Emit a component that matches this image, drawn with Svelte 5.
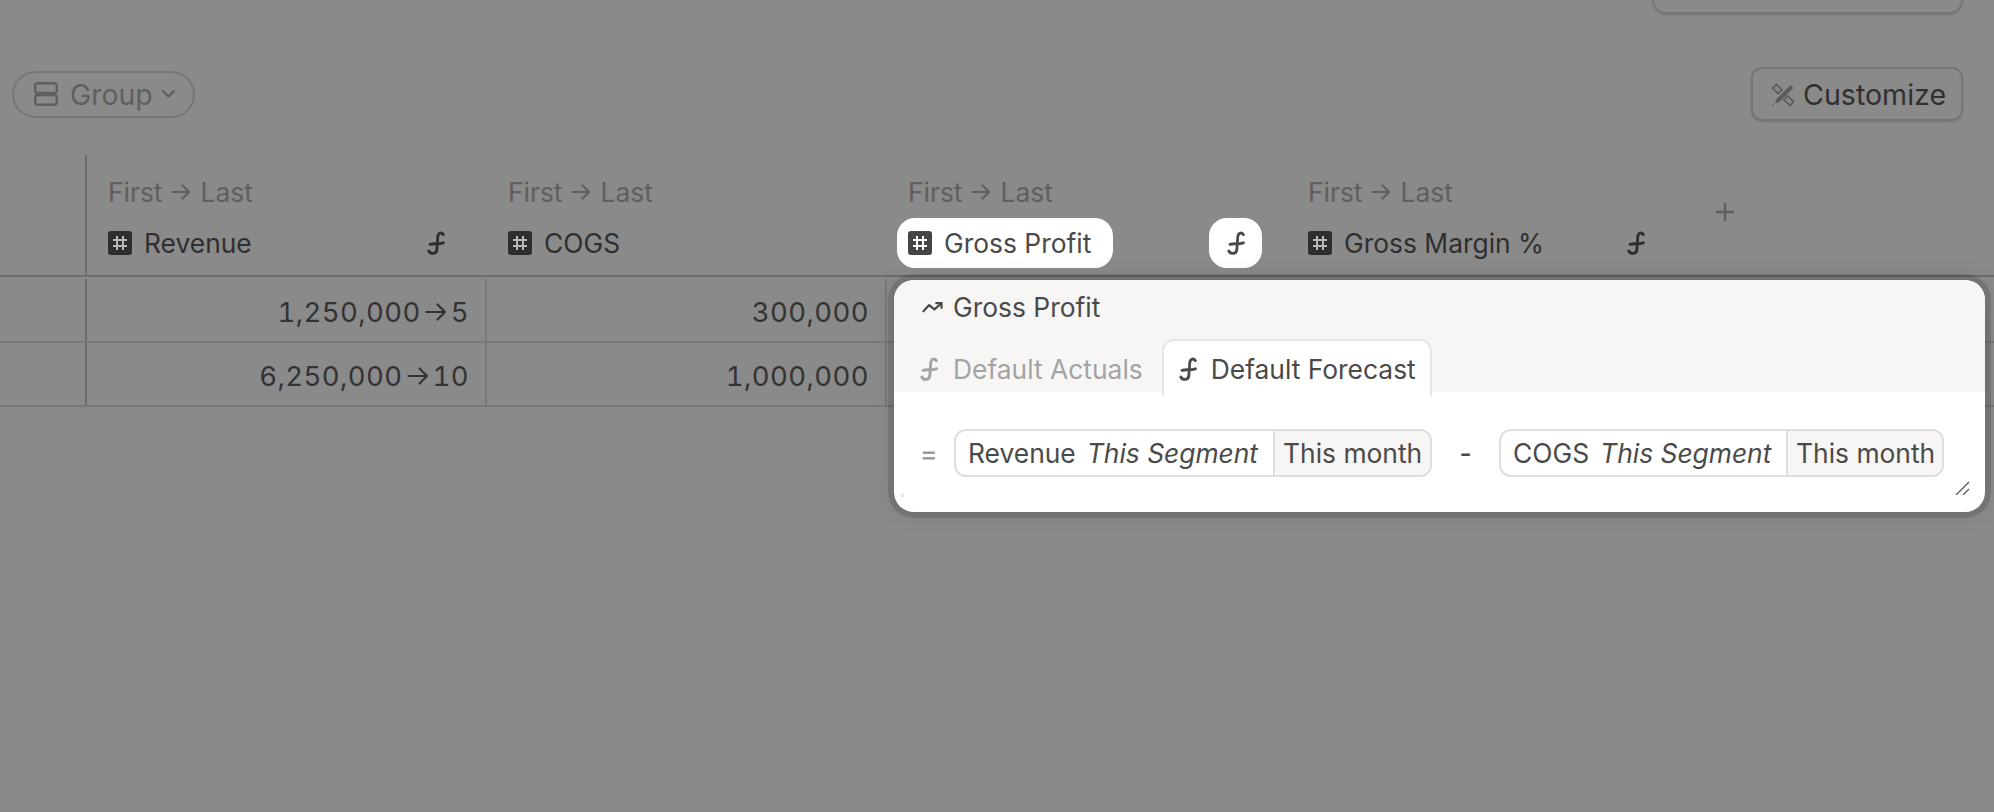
<script>
	const columns = [
		{ name: 'Revenue', active: false },
		{ name: 'COGS', active: false, noFormula: true },
		{ name: 'Gross Profit', active: true },
		{ name: 'Gross Margin %', active: false }
	];

	const rows = [
		{ revenue: '1,250,000', to: '5', cogs: '300,000' },
		{ revenue: '6,250,000', to: '10', cogs: '1,000,000' }
	];

	const terms = [
		{ name: 'COGS', op: '-' }
	];
</script>

{#snippet fx(cls)}
	<svg class={cls} viewBox="0 0 18 24" fill="none" stroke="currentColor" stroke-width="2.8" stroke-linecap="round" stroke-linejoin="round">
		<path d="M16.4 3.6C14.8 1.4 11.4 1 10.8 5.5L9.8 19C9.2 23.4 3.6 23.4 1.8 20" />
		<path d="M3 13.4C7 12 11 13.6 16.4 11.8" />
	</svg>
{/snippet}

{#snippet hash()}
	<span class="hash">
		<svg viewBox="0 0 24 24" fill="none" stroke="currentColor" stroke-width="2">
			<path d="M9 5V19M15 5V19M5 9H19M5 15H19" />
		</svg>
	</span>
{/snippet}

{#snippet arrow(cls)}
	<svg class={cls} viewBox="0 0 22 20" fill="none" stroke="currentColor" stroke-width="2.2" stroke-linecap="round" stroke-linejoin="round">
		<path d="M1.5 10H20M12.5 2.5L20 10L12.5 17.5" />
	</svg>
{/snippet}

<div class="page">
	<div class="stub-row">
		<div class="stub"></div>
	</div>

	<div class="toolbar">
		<button class="group">
			<svg class="group-icon" viewBox="0 0 24 24" fill="none" stroke="currentColor" stroke-width="2.4">
				<rect x="1.2" y="1.2" width="21.6" height="9.8" rx="2.5" />
				<rect x="1.2" y="13" width="21.6" height="9.8" rx="2.5" />
			</svg>
			<span>Group</span>
			<svg class="chev" viewBox="0 0 14 10" fill="none" stroke="currentColor" stroke-width="2.4" stroke-linecap="round" stroke-linejoin="round">
				<path d="M1.5 2L7 7.5L12.5 2" />
			</svg>
		</button>

		<button class="customize">
			<svg class="tools" viewBox="0 0 24 24" fill="none">
				<path d="M5.5 1.5L11 7L7 10.5L1.5 5ZM16.5 13L22.5 18.5L19 22.5L13 17Z" stroke="#5c5c5c" stroke-width="1.7" />
				<path d="M19.5 2.5L22 5L8.5 18.5L4.5 20L6 16Z" fill="#5c5c5c" stroke="#5c5c5c" stroke-width="1" />
				<path d="M1.5 22.5L2.5 21.5" stroke="#5c5c5c" stroke-width="1.5" />
			</svg>
			<span>Customize</span>
		</button>
	</div>

	<div class="table">
		<div class="head">
			<div class="stub-cell"></div>
			{#each columns as col}
				<div class="head-cell">
					<div class="agg">First {@render arrow('agg-arrow')} Last</div>
					<div class="col-title">
						<div class="name" class:active={col.active}>
							{@render hash()}
							<span>{col.name}</span>
						</div>
						{#if !col.noFormula}
							<div class="formula" class:active={col.active}>
								{@render fx('fx')}
							</div>
						{/if}
					</div>
				</div>
			{/each}
			<div class="plus">
				<svg viewBox="0 0 20 20" fill="none" stroke="currentColor" stroke-width="2.4">
					<path d="M10 1V19M1 10H19" />
				</svg>
			</div>
		</div>

		{#each rows as row}
			<div class="row">
				<div class="stub-cell"></div>
				<div class="cell">{row.revenue}{@render arrow('cell-arrow')}{row.to}</div>
				<div class="cell">{row.cogs}</div>
			</div>
		{/each}
	</div>

	<div class="popover">
		<div class="pop-head">
			<div class="pop-title">
				<svg class="trend" viewBox="0 0 22 12" fill="none" stroke="currentColor" stroke-width="2.3" stroke-linecap="round" stroke-linejoin="round">
					<path d="M1.5 10.5L7.5 4L13 8.5L20 2.5" />
					<path d="M15 2H20.5V7" />
				</svg>
				<span>Gross Profit</span>
			</div>
			<div class="tabs">
				<div class="tab">{@render fx('fx')}<span>Default Actuals</span></div>
				<div class="tab selected">{@render fx('fx')}<span>Default Forecast</span></div>
			</div>
		</div>

		<div class="pop-body">
			<span class="equals">=</span>
			<div class="term first">
				<div class="term-main">Revenue<em>This Segment</em></div>
				<div class="term-period">This month</div>
			</div>
			{#each terms as term}
				<span class="op">{term.op}</span>
				<div class="term second">
					<div class="term-main">{term.name}<em>This Segment</em></div>
					<div class="term-period">This month</div>
				</div>
			{/each}
		</div>

		<span class="dot"></span>
		<svg class="grip" viewBox="0 0 15 14" fill="none" stroke="#555" stroke-width="1.3">
			<path d="M1 14L14 1M8 14L14 8" />
		</svg>
	</div>
</div>

<style>
	:global(body) {
		margin: 0;
	}

	.page {
		position: relative;
		height: 812px;
		overflow: hidden;
		background: #8a8a8a;
		font-family: Inter, "Liberation Sans", sans-serif;
		font-size: 26.4px;
		color: #2f2f2f;
	}

	button {
		font: inherit;
		background: none;
		display: flex;
		align-items: center;
		padding: 0;
		box-sizing: border-box;
	}

	.stub-row {
		display: flex;
		justify-content: flex-end;
		padding-right: 31px;
	}

	.stub {
		width: 311px;
		height: 14px;
		box-sizing: border-box;
		border: 2px solid #767676;
		border-top: 0;
		border-radius: 0 0 14px 14px;
		box-shadow: 0 1px 2px rgba(0, 0, 0, 0.15);
	}

	.toolbar {
		display: flex;
		justify-content: space-between;
		align-items: center;
		height: 54px;
		margin-top: 53px;
		padding: 0 31px 0 12px;
	}

	.group {
		width: 183px;
		height: 47px;
		border: 2px solid #767676;
		border-radius: 24px;
		padding-left: 20px;
		color: #5f5f5f;
		font-size: 28.4px;
	}

	.group-icon {
		width: 24px;
		height: 24px;
		margin-right: 12px;
	}

	.chev {
		width: 15px;
		height: 10px;
		margin-left: 8px;
	}

	.customize {
		width: 212px;
		height: 54px;
		border: 2px solid #757575;
		border-radius: 11px;
		padding: 1px 0 0 18px;
		color: #303030;
		font-size: 28.6px;
		box-shadow: 0 1px 2px rgba(0, 0, 0, 0.15);
	}

	.tools {
		width: 24px;
		height: 24px;
		margin-right: 8px;
	}

	.table {
		margin-top: 34px;
	}

	.head {
		display: grid;
		grid-template-columns: 87px repeat(4, 400px) 1fr;
		height: 122px;
		box-sizing: border-box;
		border-bottom: 2px solid #6c6c6c;
	}

	.stub-cell {
		border-right: 2px solid #6c6c6c;
	}

	.head-cell {
		padding: 22px 0 0 21px;
		box-sizing: border-box;
	}

	.agg {
		display: flex;
		align-items: center;
		gap: 9px;
		height: 30px;
		color: #5f5f5f;
	}

	.agg-arrow {
		width: 20px;
		height: 18px;
	}

	.col-title {
		display: flex;
		align-items: center;
		height: 50px;
		margin-top: 12px;
		margin-left: -11px;
		position: relative;
		top: -1px;
	}

	.name {
		display: flex;
		align-items: center;
		gap: 12px;
		height: 50px;
		padding: 0 22px 0 11px;
		border-radius: 18px;
		color: #2f2f2f;
	}

	.name.active,
	.formula.active {
		background: #fff;
		color: #4a4a4a;
	}

	.hash {
		display: flex;
		width: 24px;
		height: 24px;
		border-radius: 3px;
		background: #2e2e2e;
		color: #b8b8b8;
	}

	.name.active .hash {
		background: #444;
		color: #fff;
	}

	.hash svg {
		width: 24px;
		height: 24px;
	}

	.formula {
		position: absolute;
		left: 312px;
		top: 0;
		width: 53px;
		height: 50px;
		display: flex;
		align-items: center;
		justify-content: center;
		border-radius: 18px;
		color: #2f2f2f;
	}

	.fx {
		width: 18px;
		height: 24px;
		flex-shrink: 0;
	}

	.plus {
		padding: 47px 0 0 28px;
		color: #5f5f5f;
	}

	.plus svg {
		width: 20px;
		height: 20px;
		display: block;
	}

	.row {
		display: grid;
		grid-template-columns: 87px repeat(2, 400px);
		height: 66px;
		padding-top: 2px;
		box-sizing: border-box;
		border-bottom: 2px solid #787878;
	}

	.row + .row {
		height: 64px;
		padding-top: 0;
	}

	.cell {
		display: flex;
		align-items: center;
		justify-content: flex-end;
		padding: 3px 16px 0 0;
		border-right: 2px solid #787878;
		font-size: 27.5px;
		font-variant-numeric: tabular-nums;
		letter-spacing: 0.4px;
		color: #333;
	}

	.cell-arrow {
		width: 22px;
		height: 20px;
		margin: 0 4px;
	}

	.popover {
		position: absolute;
		left: 894px;
		top: 280px;
		width: 1091px;
		height: 232px;
		border-radius: 20px;
		overflow: hidden;
		background: #fff;
		color: #4a4a4a;
		box-shadow: 0 0 0 6px rgba(0, 0, 0, 0.12), 0 0 24px rgba(0, 0, 0, 0.12);
	}

	.pop-head {
		height: 112px;
		box-sizing: border-box;
		background: #f7f6f4;
		padding: 12px 0 0 26px;
	}

	.pop-title {
		display: flex;
		align-items: center;
		gap: 10px;
		height: 30px;
		padding-left: 2px;
		color: #4a4a4a;
	}

	.trend {
		width: 21px;
		height: 12px;
	}

	.tabs {
		display: flex;
		margin-top: 17px;
	}

	.tab {
		display: flex;
		align-items: center;
		gap: 15px;
		height: 57px;
		padding-top: 2px;
		box-sizing: border-box;
		color: #a3a3a3;
	}

	.tab.selected {
		margin-left: 19px;
		padding: 0 14px 0 15px;
		gap: 14px;
		background: #fff;
		color: #4a4a4a;
		border: 2px solid #e6e6e4;
		border-bottom: 0;
		border-radius: 12px 12px 0 0;
	}

	.pop-body {
		display: flex;
		align-items: center;
		height: 48px;
		margin-top: 37px;
		padding-left: 26px;
	}

	.equals {
		width: 34px;
		color: #9a9a9a;
		font-weight: 500;
	}

	.op {
		width: 67px;
		text-align: center;
		font-weight: 500;
	}

	.term {
		display: flex;
		align-items: stretch;
		height: 48px;
		box-sizing: border-box;
		border: 2px solid #dedede;
		border-radius: 12px;
		overflow: hidden;
		white-space: nowrap;
	}

	.first {
		width: 478px;
	}

	.second {
		width: 445px;
	}

	.term-main {
		display: flex;
		align-items: center;
		padding-left: 12px;
		gap: 11px;
		box-sizing: border-box;
		border-right: 2px solid #dedede;
	}

	.first .term-main {
		width: 319px;
	}

	.second .term-main {
		width: 287px;
	}

	.term-period {
		flex: 1;
		display: flex;
		align-items: center;
		padding-left: 8px;
		background: #f7f6f4;
	}

	.dot {
		position: absolute;
		left: 7px;
		bottom: 15px;
		width: 3px;
		height: 3px;
		background: #e8e8e8;
	}

	.grip {
		position: absolute;
		right: 15px;
		bottom: 17px;
		width: 15px;
		height: 14px;
	}
</style>
